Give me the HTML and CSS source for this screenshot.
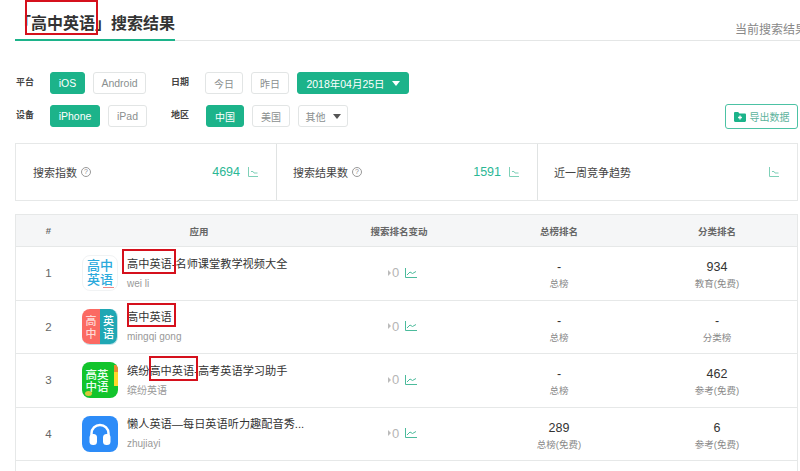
FILE: index.html
```html
<!DOCTYPE html>
<html lang="zh-CN">
<head>
<meta charset="utf-8">
<title>搜索结果</title>
<link rel="stylesheet" href="styles.css">
</head>
<body>
<div class="page">
  <header class="head">
    <h1 class="head-title">「<span class="mark mark-title">高中英语</span>」搜索结果</h1>
    <span class="head-side">当前搜索结果</span>
  </header>

  <section class="filters">
    <div class="filter-col">
      <div class="filter-row"><span class="filter-label">平台</span><a class="btn on w-ios">iOS</a><a class="btn w-android">Android</a></div>
      <div class="filter-row"><span class="filter-label">设备</span><a class="btn on w-iphone">iPhone</a><a class="btn w-ipad">iPad</a></div>
    </div>
    <div class="filter-col col-second">
      <div class="filter-row"><span class="filter-label">日期</span><a class="btn w-day">今日</a><a class="btn w-day">昨日</a><a class="btn on w-date">2018年04月25日<i class="caret caret-white"></i></a></div>
      <div class="filter-row"><span class="filter-label label-wide">地区</span><a class="btn on w-day">中国</a><a class="btn w-day">美国</a><a class="btn w-other">其他<i class="caret"></i></a></div>
    </div>
    <a class="export">
      <svg class="export-icon" viewBox="0 0 12 10" width="12" height="10"><path d="M0 1.200C0 .5.500 0 1.200 0h3l1.200 1.400h5.400c.7 0 1.200.5 1.200 1.200v6.200c0 .7-.5 1.200-1.200 1.200H1.200C.5 10 0 9.500 0 8.800z" fill="#1cb38a"/><path d="M6 3.600v3.800M4.100 5.500h3.800" stroke="#fff" stroke-width="1.300"/></svg>导出数据
    </a>
  </section>

  <section class="stats">
    <div class="stat stat-first">
      <span class="stat-name">搜索指数</span><span class="help">?</span>
      <span class="stat-num">4694</span>
      <svg class="stat-chart" viewBox="0 0 10 10" width="10" height="10"><path d="M.5 0v9.500H10M3 4.500h2l1 1.500h3.500" fill="none" stroke="#7fd0b8"/></svg>
    </div>
    <div class="stat">
      <span class="stat-name">搜索结果数</span><span class="help">?</span>
      <span class="stat-num">1591</span>
      <svg class="stat-chart" viewBox="0 0 10 10" width="10" height="10"><path d="M.5 0v9.500H10M3 4.500h2l1 1.500h3.500" fill="none" stroke="#7fd0b8"/></svg>
    </div>
    <div class="stat">
      <span class="stat-name">近一周竞争趋势</span>
      <svg class="stat-chart stat-chart-end" viewBox="0 0 10 10" width="10" height="10"><path d="M.5 0v9.500H10M3 4.500h2l1 1.500h3.500" fill="none" stroke="#7fd0b8"/></svg>
    </div>
  </section>

  <section class="table">
    <div class="tr th">
      <div>#</div><div>应用</div><div>搜索排名变动</div><div>总榜排名</div><div>分类排名</div>
    </div>

    <div class="tr">
      <div class="rank">1</div>
      <div class="app">
        <div class="icon icon-a"><span>高中</span><span>英语</span><i class="icon-a-foot"></i></div>
        <div class="app-text">
          <div class="app-name"><span class="mark mark-one">高中英语</span>-名师课堂教学视频大全</div>
          <div class="app-sub">wei li</div>
        </div>
      </div>
      <div class="change"><i class="tri"></i>0<svg class="line" viewBox="0 0 12 10" width="12" height="10"><path d="M.5 0v9.500H12M2 7l3-3 2.500 1.500L11 3.500" fill="none" stroke="#4cbb9c"/></svg></div>
      <div class="num"><b>-</b><small>总榜</small></div>
      <div class="num"><b>934</b><small>教育(免费)</small></div>
    </div>

    <div class="tr">
      <div class="rank">2</div>
      <div class="app">
        <div class="icon icon-b"><span class="b-l">高<br>中</span><span class="b-r">英<br>语</span></div>
        <div class="app-text">
          <div class="app-name"><span class="mark mark-two">高中英语</span></div>
          <div class="app-sub">mingqi gong</div>
        </div>
      </div>
      <div class="change"><i class="tri"></i>0<svg class="line" viewBox="0 0 12 10" width="12" height="10"><path d="M.5 0v9.500H12M2 7l3-3 2.500 1.500L11 3.500" fill="none" stroke="#4cbb9c"/></svg></div>
      <div class="num"><b>-</b><small>总榜</small></div>
      <div class="num"><b>-</b><small>分类榜</small></div>
    </div>

    <div class="tr">
      <div class="rank">3</div>
      <div class="app">
        <div class="icon icon-c"><span>高英</span><span>中语</span><i class="c-tab"></i><i class="c-badge"></i></div>
        <div class="app-text">
          <div class="app-name">缤纷<span class="mark mark-three">高中英语</span>-高考英语学习助手</div>
          <div class="app-sub">缤纷英语</div>
        </div>
      </div>
      <div class="change"><i class="tri"></i>0<svg class="line" viewBox="0 0 12 10" width="12" height="10"><path d="M.5 0v9.500H12M2 7l3-3 2.500 1.500L11 3.500" fill="none" stroke="#4cbb9c"/></svg></div>
      <div class="num"><b>-</b><small>总榜</small></div>
      <div class="num"><b>462</b><small>参考(免费)</small></div>
    </div>

    <div class="tr">
      <div class="rank">4</div>
      <div class="app">
        <div class="icon icon-d">
          <svg viewBox="0 0 36 36" width="36" height="36"><path d="M9.500 22v-4.500a8.500 8.500 0 0 1 17 0v4.500" fill="none" stroke="#fff" stroke-width="2.500"/><rect x="7.500" y="18" width="7.500" height="11" rx="3.500" fill="#fff"/><rect x="21" y="18" width="7.500" height="11" rx="3.500" fill="#fff"/></svg>
        </div>
        <div class="app-text">
          <div class="app-name">懒人英语—每日英语听力趣配音秀...</div>
          <div class="app-sub">zhujiayi</div>
        </div>
      </div>
      <div class="change"><i class="tri"></i>0<svg class="line" viewBox="0 0 12 10" width="12" height="10"><path d="M.5 0v9.500H12M2 7l3-3 2.500 1.500L11 3.500" fill="none" stroke="#4cbb9c"/></svg></div>
      <div class="num"><b>289</b><small>总榜(免费)</small></div>
      <div class="num"><b>6</b><small>参考(免费)</small></div>
    </div>
  </section>
</div>
</body>
</html>
```
FILE: styles.css
```css
* { box-sizing: border-box; }
html, body { margin: 0; padding: 0; }
body {
  width: 800px;
  height: 471px;
  overflow: hidden;
  background: #fff;
  color: #333;
  font-family: "Liberation Sans", "Noto Sans CJK SC", sans-serif;
}
.page { width: 800px; }

.mark { position: relative; }
.mark::after {
  content: "";
  position: absolute;
  border: 2px solid #d5101c;
  pointer-events: none;
}
.mark-title::after { left: -6px; right: -3px; top: -15px; bottom: -3px; }
.mark-one::after { left: -5px; right: -4px; top: -9px; bottom: -4px; }
.mark-two::after { left: 0; right: -4px; top: -8px; bottom: -4px; }
.mark-three::after { left: 0; right: -4px; top: -9px; bottom: -4px; }

.head {
  margin-left: 15px;
  height: 41px;
  display: flex;
  justify-content: space-between;
  align-items: flex-end;
  border-bottom: 1px solid #e4e6e6;
}
.head-title {
  margin: 0 0 -1px;
  width: 160px;
  height: 41px;
  padding-top: 14px;
  font-size: 16px;
  line-height: 19px;
  font-weight: 700;
  color: #333;
  white-space: nowrap;
  border-bottom: 2px solid #1cb38a;
}
.head-side {
  flex: none;
  width: 65px;
  height: 18px;
  padding-bottom: 2px;
  overflow: hidden;
  font-size: 12px;
  line-height: 16px;
  color: #888;
  white-space: nowrap;
}

.filters {
  display: flex;
  margin: 31px 2px 0 16px;
  height: 56px;
}
.filter-col { display: flex; flex-direction: column; gap: 11px; }
.col-second { margin-left: 24px; }
.filter-row { display: flex; align-items: center; height: 22px; gap: 8px; }
.filter-label {
  flex: none;
  width: 26px;
  margin-bottom: 3px;
  font-size: 9px;
  font-weight: 700;
  color: #444;
}
.label-wide { width: 27px; }
.btn {
  flex: none;
  display: inline-flex;
  align-items: center;
  justify-content: center;
  height: 22px;
  border: 1px solid #e2e5e5;
  border-radius: 3px;
  background: #fff;
  font-size: 10.500px;
  color: #8a8f8f;
  white-space: nowrap;
}
.btn.on { background: #1cb38a; border-color: #1cb38a; color: #fff; }
.w-ios { width: 35px; }
.w-android { width: 53px; }
.w-iphone { width: 50px; }
.w-ipad { width: 39px; }
.w-day { width: 38px; font-size: 10px; }
.w-date { width: 112px; }
.w-other { width: 50px; font-size: 10px; }
.caret {
  display: inline-block;
  width: 0;
  height: 0;
  margin-left: 7px;
  border-left: 4px solid transparent;
  border-right: 4px solid transparent;
  border-top: 5px solid #555;
}
.caret-white { border-top-color: #fff; }
.export {
  align-self: flex-end;
  display: flex;
  align-items: center;
  justify-content: center;
  gap: 4px;
  width: 73px;
  height: 25px;
  margin: 0 0 -1px auto;
  border: 1px solid #4cc2a4;
  border-radius: 3px;
  font-size: 10px;
  color: #5cb39c;
  white-space: nowrap;
}
.export-icon { flex: none; }

.stats {
  display: grid;
  grid-template-columns: 260px 261px 1fr;
  height: 58px;
  margin: 15px 2px 0 15px;
  border: 1px solid #e6e8e8;
}
.stat {
  display: flex;
  align-items: center;
  padding: 0 18px 0 16px;
  border-left: 1px solid #e0e3e3;
}
.stat-first { border-left: 0; padding-left: 17px; }
.stat-name { font-size: 11px; color: #444; white-space: nowrap; }
.help {
  width: 10px;
  height: 10px;
  margin-left: 4px;
  border: 1px solid #999;
  border-radius: 50%;
  font-size: 7px;
  line-height: 8px;
  text-align: center;
  color: #888;
}
.stat-num { margin-left: auto; font-size: 12.500px; color: #2bb795; }
.stat-chart { flex: none; margin-left: 8px; }
.stat-chart-end { margin-left: auto; }

.table {
  min-height: 280px;
  margin: 13px 2px 0 15px;
  border: 1px solid #e6e8e8;
  border-bottom: 0;
}
.tr {
  display: grid;
  grid-template-columns: 65px 236px 164px 156px 1fr;
  align-items: center;
  height: 53.500px;
  text-align: center;
  border-bottom: 1px solid #e6e8e8;
}
.th {
  height: 32px;
  background: #f5f6f7;
  font-size: 9.500px;
  font-weight: 700;
  color: #666;
}
.rank { font-size: 11.500px; color: #666; }
.app { display: flex; align-items: center; gap: 9px; padding-left: 1px; text-align: left; }
.icon {
  position: relative;
  flex: none;
  width: 36px;
  height: 36px;
  border-radius: 8px;
  overflow: hidden;
  font-family: "Noto Sans CJK SC", sans-serif;
}
.icon-a {
  display: flex;
  flex-direction: column;
  align-items: center;
  justify-content: center;
  padding-bottom: 3px;
  border: 1px solid #f1f3f4;
  font-size: 13px;
  line-height: 14px;
  font-weight: 500;
  color: #2aa9dc;
}
.icon-a-foot {
  position: absolute;
  right: 3px;
  bottom: 2px;
  width: 11px;
  height: 1px;
  background: #e88;
}
.icon-b {
  display: flex;
  border-right: 1px solid #bfe3ea;
  border-bottom: 1px solid #bfe3ea;
  font-size: 11px;
  line-height: 13px;
  font-weight: 500;
  color: #fff;
  text-align: center;
}
.b-l { width: 18px; padding-top: 5px; background: #fb6a63; color: #ffd9d6; }
.b-r { flex: 1; padding-top: 5px; background: #1fa7b4; }
.icon-c {
  display: flex;
  flex-direction: column;
  align-items: center;
  justify-content: center;
  padding-right: 6px;
  background: #12c42c;
  font-size: 11.500px;
  line-height: 12px;
  font-weight: 500;
  color: #eafff0;
}
.c-tab {
  position: absolute;
  top: 3px;
  right: 0;
  width: 4px;
  height: 21px;
  background: linear-gradient(#f08a2c 0 35%, #ffd82a 35% 100%);
}
.c-badge {
  position: absolute;
  left: 3px;
  bottom: 2px;
  width: 7px;
  height: 5px;
  border-radius: 50%;
  background: #d8c83a;
}
.icon-d { background: #2d8cf8; }
.icon-d svg { display: block; }
.app-text { min-width: 0; }
.app-name { font-size: 11.200px; line-height: 14px; color: #333; white-space: nowrap; }
.app-sub { margin-top: 7px; font-size: 10px; line-height: 12px; color: #999; white-space: nowrap; }
.change {
  display: flex;
  align-items: center;
  justify-content: center;
  padding-left: 7px;
  padding-bottom: 1px;
  font-size: 13px;
  color: #b5b5b5;
}
.tri {
  width: 0;
  height: 0;
  margin-right: 1px;
  border-top: 3px solid transparent;
  border-bottom: 3px solid transparent;
  border-left: 3px solid #bbb;
}
.line { margin-left: 6px; }
.num { display: flex; flex-direction: column; align-items: center; padding-top: 4px; }
.num b { font-weight: 400; font-size: 12.500px; line-height: 15px; color: #333; }
.num small { margin-top: 2px; font-size: 9.500px; line-height: 13px; color: #888; }
```
